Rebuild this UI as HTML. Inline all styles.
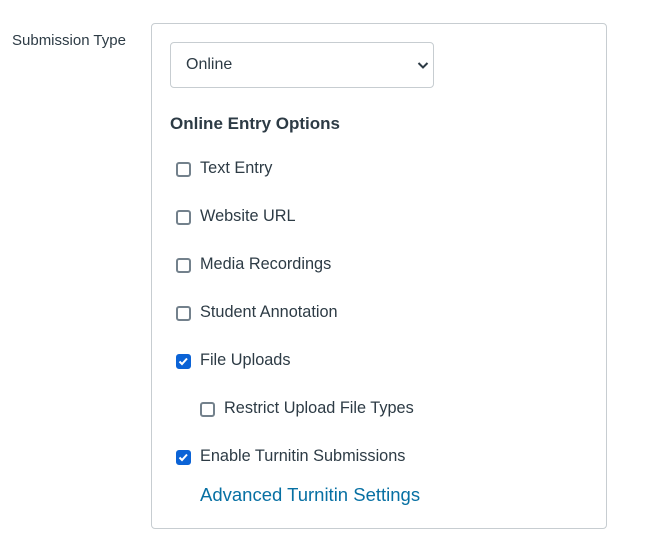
<!DOCTYPE html>
<html><head><style>
body{margin:0;width:666px;height:541px;background:#fff;font-family:"Liberation Sans",sans-serif;color:#2d3b45;position:relative;overflow:hidden}
.a{position:absolute}
.lbl{left:12px;top:32px;font-size:15px}
.box{left:151px;top:23px;width:454px;height:504px;border:1px solid #c7cdd1;border-radius:4px}
.sel{left:170px;top:42px;width:262px;height:44px;border:1px solid #c7cdd1;border-radius:4px}
.sel span{position:absolute;left:15px;top:13px;font-size:16px}
.h{left:170px;top:114px;font-size:17px;font-weight:bold}
.cb{box-sizing:border-box;width:15px;height:15px;border:2px solid #73818c;border-radius:3px;background:#fff}
.cb.on{background:#0b63d6;border-color:#0b63d6}
.t{font-size:16.3px}
.link{left:200px;top:484px;font-size:18.5px;color:#0770a3}
</style></head><body>
<div class="a lbl">Submission Type</div>
<div class="a box"></div>
<div class="a sel"><span>Online</span>
<svg class="a" style="left:246px;top:18px" width="12" height="9" viewBox="0 0 12 9"><path d="M1.5 2l4.5 4.5 4.5-4.5" fill="none" stroke="#2d3b45" stroke-width="2"/></svg></div>
<div class="a h">Online Entry Options</div>

<div class="a cb" style="left:176px;top:162px"></div><div class="a t" style="left:200px;top:159px">Text Entry</div>
<div class="a cb" style="left:176px;top:210px"></div><div class="a t" style="left:200px;top:207px">Website URL</div>
<div class="a cb" style="left:176px;top:258px"></div><div class="a t" style="left:200px;top:255px">Media Recordings</div>
<div class="a cb" style="left:176px;top:306px"></div><div class="a t" style="left:200px;top:303px">Student Annotation</div>
<div class="a cb on" style="left:176px;top:354px"><svg class="a" style="left:0;top:0" width="11" height="11" viewBox="0 0 11 11"><path d="M1.5 5.5l2.5 2.5 5-5.5" fill="none" stroke="#fff" stroke-width="2"/></svg></div><div class="a t" style="left:200px;top:351px">File Uploads</div>
<div class="a cb" style="left:200px;top:402px"></div><div class="a t" style="left:224px;top:399px">Restrict Upload File Types</div>
<div class="a cb on" style="left:176px;top:450px"><svg class="a" style="left:0;top:0" width="11" height="11" viewBox="0 0 11 11"><path d="M1.5 5.5l2.5 2.5 5-5.5" fill="none" stroke="#fff" stroke-width="2"/></svg></div><div class="a t" style="left:200px;top:447px">Enable Turnitin Submissions</div>
<div class="a link">Advanced Turnitin Settings</div>
</body></html>
